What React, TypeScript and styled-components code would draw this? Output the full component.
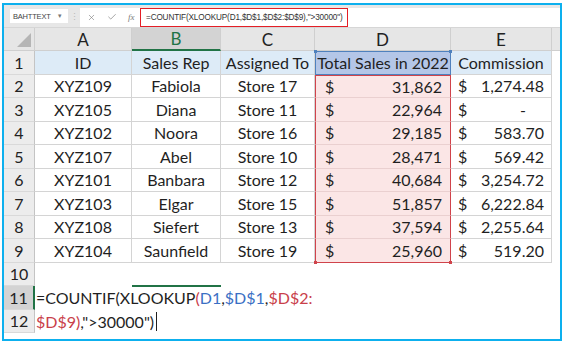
import React from 'react';
import styled, { createGlobalStyle, css } from 'styled-components';
import { X, Check } from 'lucide-react';

const GlobalStyle = createGlobalStyle`
  body {
    margin: 0;
    background: #ffffff;
  }
`;

type Row = {
  id: string;
  rep: string;
  store: string;
  sales: string;
  commission: string;
};

const rows: Row[] = [
  { id: 'XYZ109', rep: 'Fabiola', store: 'Store 17', sales: '31,862', commission: '1,274.48' },
  { id: 'XYZ105', rep: 'Diana', store: 'Store 11', sales: '22,964', commission: '-' },
  { id: 'XYZ102', rep: 'Noora', store: 'Store 16', sales: '29,185', commission: '583.70' },
  { id: 'XYZ107', rep: 'Abel', store: 'Store 10', sales: '28,471', commission: '569.42' },
  { id: 'XYZ101', rep: 'Banbara', store: 'Store 12', sales: '40,684', commission: '3,254.72' },
  { id: 'XYZ103', rep: 'Elgar', store: 'Store 15', sales: '51,857', commission: '6,222.84' },
  { id: 'XYZ108', rep: 'Siefert', store: 'Store 13', sales: '37,594', commission: '2,255.64' },
  { id: 'XYZ104', rep: 'Saunfield', store: 'Store 19', sales: '25,960', commission: '519.20' },
];

const columns = ['A', 'B', 'C', 'D', 'E'];

export default function App() {
  return (
    <>
      <GlobalStyle />
      <Frame>
        <FormulaBar>
          <NameBox>
            <span>BAHTTEXT</span>
            <Caret>▾</Caret>
          </NameBox>
          <Grip>⋮</Grip>
          <InputArea>
            <ToolIcons>
              <X size={9} strokeWidth={1.6} />
              <Check size={10} strokeWidth={1.6} />
              <Fx>fx</Fx>
            </ToolIcons>
            <FormulaBox>=COUNTIF(XLOOKUP(D1,$D$1,$D$2:$D$9),"&gt;30000")</FormulaBox>
          </InputArea>
        </FormulaBar>

        <Sheet>
          <Corner>
            <CornerTriangle />
          </Corner>
          {columns.map((c) => (
            <ColHeader key={c} $active={c === 'B'}>
              {c}
            </ColHeader>
          ))}
          <Filler />

          <RowHeader>1</RowHeader>
          <Cell $head>ID</Cell>
          <Cell $head>Sales Rep</Cell>
          <Cell $head>Assigned To</Cell>
          <SalesHead>Total Sales in 2022</SalesHead>
          <Cell $head>Commission</Cell>
          <Filler $line />

          {rows.map((r, i) => (
            <React.Fragment key={r.id}>
              <RowHeader>{i + 2}</RowHeader>
              <Cell>{r.id}</Cell>
              <Cell>{r.rep}</Cell>
              <Cell>{r.store}</Cell>
              <SalesCell $first={i === 0} $last={i === rows.length - 1}>
                <span>$</span>
                <span>{r.sales}</span>
              </SalesCell>
              <MoneyCell>
                <span>$</span>
                <Amount $dash={r.commission === '-'}>{r.commission}</Amount>
              </MoneyCell>
              <Filler $line />
            </React.Fragment>
          ))}

          <RowHeader>10</RowHeader>
          <Blank />

          <RowHeader $active>11</RowHeader>
          <FormulaLine $marked>
            =COUNTIF(XLOOKUP<Red>(</Red>
            <Blue>D1</Blue>,<Blue>$D$1</Blue>,<Red>$D$2:</Red>
          </FormulaLine>

          <RowHeader>12</RowHeader>
          <FormulaLine>
            <Red>$D$9)</Red>,"&gt;30000")<Cursor />
          </FormulaLine>
        </Sheet>
      </Frame>
    </>
  );
}

const Frame = styled.div`
  box-sizing: border-box;
  margin: 3px 0 0 2px;
  width: 560px;
  height: 338px;
  border: 2px solid #0db0ee;
  display: flex;
  flex-direction: column;
  background: #ffffff;
  overflow: hidden;
  font-family: Lato, 'Noto Sans', sans-serif;
`;

const FormulaBar = styled.div`
  height: 23px;
  flex: none;
  display: flex;
  align-items: center;
  background: #e7e7e7;
  padding: 0 0 0 6px;
  border-bottom: 1px solid #d6d6d6;
  box-sizing: border-box;
`;

const NameBox = styled.div`
  width: 58px;
  height: 14px;
  background: #ffffff;
  display: flex;
  align-items: center;
  justify-content: space-between;
  padding: 0 6px 0 3px;
  box-sizing: border-box;
  font-family: 'Liberation Sans', Arial, sans-serif;
  font-size: 7.5px;
  color: #444444;
  letter-spacing: -0.2px;
`;

const Caret = styled.span`
  font-size: 7px;
  color: #777777;
`;

const Grip = styled.span`
  width: 12px;
  text-align: center;
  font-size: 9px;
  color: #b9b9b9;
`;

const InputArea = styled.div`
  flex: 1;
  height: 19px;
  margin-top: 2px;
  background: #ffffff;
  display: flex;
  align-items: center;
`;

const ToolIcons = styled.div`
  width: 60px;
  display: flex;
  align-items: center;
  justify-content: space-around;
  padding-left: 2px;
  color: #7a7a7a;
  box-sizing: border-box;
`;

const Fx = styled.span`
  font-family: 'Liberation Serif', serif;
  font-style: italic;
  font-size: 9px;
  color: #7a7a7a;
`;

const FormulaBox = styled.div`
  height: 19px;
  box-sizing: border-box;
  border: 1.5px solid #e41e26;
  display: flex;
  align-items: center;
  padding: 0 4px 0 5px;
  font-family: 'Liberation Sans', Arial, sans-serif;
  font-size: 8.2px;
  letter-spacing: -0.15px;
  color: #333333;
  white-space: nowrap;
`;

const Sheet = styled.div`
  flex: 1;
  display: grid;
  grid-template-columns: 31px 97px 89px 94px 136px 101px 1fr;
  grid-template-rows: 23px repeat(12, 23.5px);
  font-size: 16px;
  color: #1f1f1f;
`;

const headerBase = css`
  background: #e6e6e6;
  border-right: 1px solid #cfcfcf;
  border-bottom: 1px solid #cfcfcf;
  box-sizing: border-box;
  display: flex;
  align-items: center;
  justify-content: center;
  color: #222222;
`;

const Corner = styled.div`
  ${headerBase};
  position: relative;
`;

const CornerTriangle = styled.div`
  position: absolute;
  right: 3px;
  bottom: 3px;
  width: 0;
  height: 0;
  border-left: 14px solid transparent;
  border-bottom: 14px solid #b5b5b5;
`;

const ColHeader = styled.div<{ $active?: boolean }>`
  ${headerBase};
  font-size: 17px;
  ${({ $active }) =>
    $active &&
    css`
      background: #d3d3d3;
      color: #217346;
      border-bottom: 2px solid #217346;
    `}
`;

const RowHeader = styled.div<{ $active?: boolean }>`
  ${headerBase};
  grid-column: 1;
  background: #ececec;
  border-right: 1px solid #c4c4c4;
  border-bottom: 1px solid #d9d9d9;
  ${({ $active }) =>
    $active &&
    css`
      background: #d3d3d3;
      border-right: 2px solid #217346;
    `}
`;

const Filler = styled.div<{ $line?: boolean }>`
  background: #ffffff;
  ${({ $line }) =>
    !$line &&
    css`
      background: #e6e6e6;
      border-bottom: 1px solid #cfcfcf;
    `}
`;

const Cell = styled.div<{ $head?: boolean }>`
  box-sizing: border-box;
  display: flex;
  align-items: center;
  justify-content: center;
  border-right: 1px solid #d4d4d4;
  border-bottom: 1px solid #d4d4d4;
  white-space: nowrap;
  background: ${({ $head }) => ($head ? '#ddebf7' : '#ffffff')};
`;

const SalesHead = styled(Cell)`
  position: relative;
  background: #b4c6e7;
  border: 1px solid #4f81bd;
  &::before,
  &::after {
    content: '';
    position: absolute;
    width: 3px;
    height: 3px;
    background: #4f81bd;
    top: -2px;
  }
  &::before {
    left: -2px;
  }
  &::after {
    right: -2px;
  }
`;

const SalesCell = styled.div<{ $first?: boolean; $last?: boolean }>`
  position: relative;
  box-sizing: border-box;
  display: flex;
  align-items: center;
  justify-content: space-between;
  padding: 0 8px 0 9px;
  background: #fbe6e6;
  border-left: 1px solid #d0434b;
  border-right: 1px solid #d0434b;
  border-bottom: 1px solid ${({ $last }) => ($last ? '#d0434b' : '#ead0d0')};
  ${({ $first }) =>
    $first &&
    css`
      border-top: 1px solid #d0434b;
    `}
  ${({ $last }) =>
    $last &&
    css`
      &::before,
      &::after {
        content: '';
        position: absolute;
        width: 3px;
        height: 3px;
        background: #d0434b;
        bottom: -2px;
      }
      &::before {
        left: -2px;
      }
      &::after {
        right: -2px;
      }
    `}
`;

const MoneyCell = styled.div`
  box-sizing: border-box;
  display: flex;
  align-items: center;
  justify-content: space-between;
  padding: 0 7px 0 7px;
  border-right: 1px solid #d4d4d4;
  border-bottom: 1px solid #d4d4d4;
`;

const Amount = styled.span<{ $dash?: boolean }>`
  padding-right: ${({ $dash }) => ($dash ? '18px' : '0')};
`;

const Blank = styled.div`
  grid-column: 2 / -1;
`;

const FormulaLine = styled.div<{ $marked?: boolean }>`
  grid-column: 2 / -1;
  position: relative;
  display: flex;
  align-items: center;
  padding-left: 1px;
  white-space: pre;
  color: #1f1f1f;
  ${({ $marked }) =>
    $marked &&
    css`
      &::before {
        content: '';
        position: absolute;
        left: 97px;
        top: -1px;
        width: 89px;
        height: 2px;
        background: #217346;
      }
    `}
`;

const Blue = styled.span`
  color: #3a6fc4;
`;

const Red = styled.span`
  color: #c9404a;
`;

const Cursor = styled.span`
  display: inline-block;
  width: 1px;
  height: 19px;
  margin-left: 2px;
  background: #1f1f1f;
`;
